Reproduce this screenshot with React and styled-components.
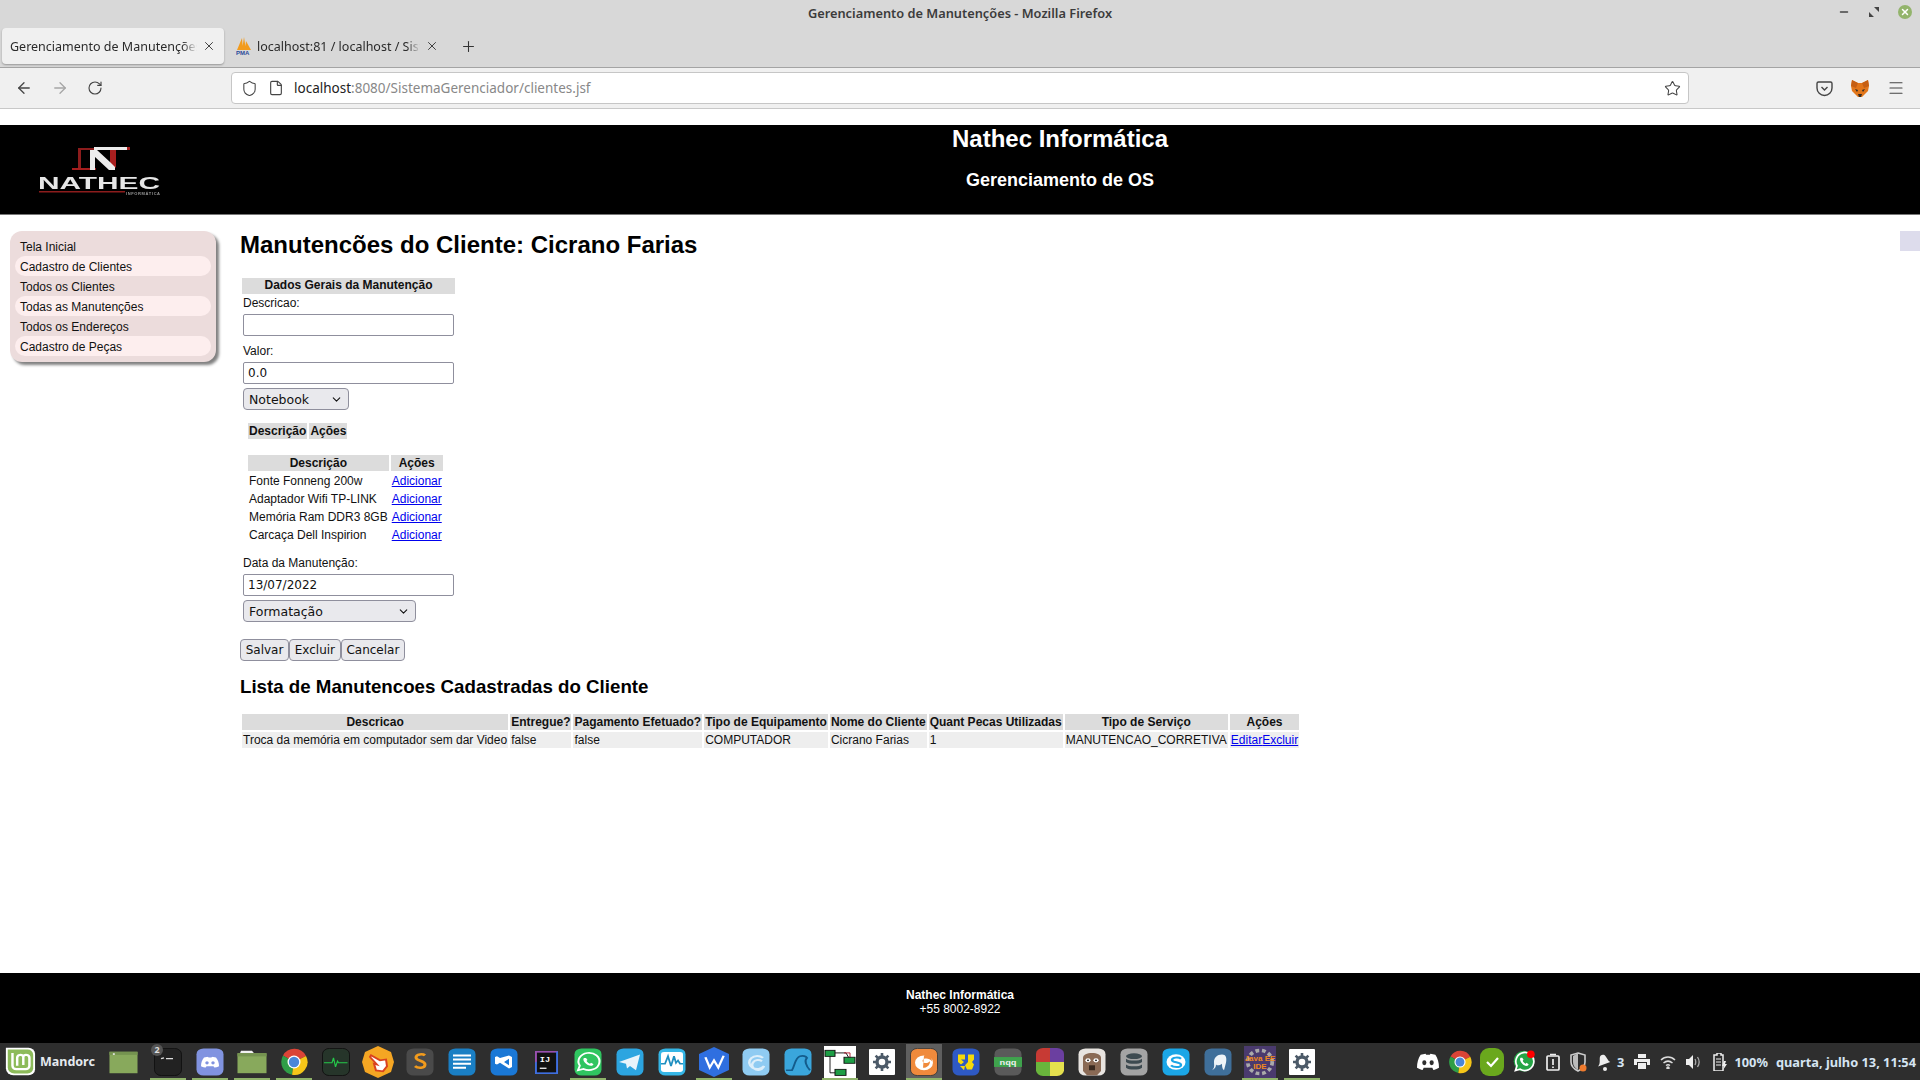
import React from 'react'
import styled, { createGlobalStyle } from 'styled-components'
import { ArrowLeft, ArrowRight, RotateCw, Shield, File, Star, Menu, X, Plus, ChevronDown, Minus } from 'lucide-react'

const Global = createGlobalStyle`
  html, body { margin: 0; padding: 0; background: #fff; }
  body { font-family: "Liberation Sans", Arial, sans-serif; font-size: 12px; color: #111; overflow: hidden; }
`

const uiFont = `"Noto Sans", "Open Sans", sans-serif`

const Screen = styled.div`
  width: 1920px;
  height: 1080px;
  display: flex;
  flex-direction: column;
`

const TitleBar = styled.div`
  height: 28px;
  flex: none;
  background: #d8d8d8;
  display: flex;
  align-items: flex-start;
  justify-content: center;
  position: relative;
  padding-top: 4px;
  box-sizing: border-box;
  font-family: ${uiFont};
  font-size: 12.8px;
  font-weight: 600;
  color: #3c3c3c;
`

const WinControls = styled.div`
  position: absolute;
  right: 8px;
  top: 5px;
  display: flex;
  align-items: center;
  gap: 18px;
  height: 14px;
`

const CloseDot = styled.div`
  width: 14px;
  height: 14px;
  border-radius: 50%;
  background: #93b46c;
  display: flex;
  align-items: center;
  justify-content: center;
  color: #fff;
`

const TabStrip = styled.div`
  height: 40px;
  flex: none;
  background: #d8d8d8;
  border-bottom: 1px solid #a4a4a4;
  box-sizing: border-box;
  display: flex;
  align-items: flex-start;
  padding-left: 2px;
`

const Tab = styled.div`
  width: ${(p) => p.$width}px;
  height: 36px;
  box-sizing: border-box;
  display: flex;
  align-items: center;
  padding: 0 8px;
  gap: 5px;
  font-family: ${uiFont};
  font-size: 12.5px;
  color: #2a2a2a;
  background: ${(p) => (p.$active ? '#f0f0f0' : 'transparent')};
  border-radius: 4px;
  box-shadow: ${(p) => (p.$active ? '0 1px 2px rgba(0,0,0,.3)' : 'none')};
  margin-right: ${(p) => p.$gap || 0}px;
`

const TabLabel = styled.span`
  flex: 1;
  overflow: hidden;
  white-space: nowrap;
  -webkit-mask-image: linear-gradient(to right, #000 92%, transparent);
  mask-image: linear-gradient(to right, #000 92%, transparent);
`

const NewTab = styled.div`
  height: 36px;
  display: flex;
  align-items: center;
  color: #333;
`

const ToolBar = styled.div`
  height: 41px;
  flex: none;
  background: #f0f0f0;
  border-bottom: 1px solid #c8c8c8;
  box-sizing: border-box;
  display: flex;
  align-items: center;
  padding-left: 15px;
`

const NavBtn = styled.div`
  width: 36px;
  display: flex;
  color: ${(p) => (p.$off ? '#a5a5a5' : '#444')};
`

const UrlBar = styled.div`
  margin-left: 108px;
  width: 1458px;
  height: 32px;
  background: #fff;
  border: 1px solid #c6c6c6;
  border-radius: 4px;
  box-sizing: border-box;
  display: flex;
  align-items: center;
  padding: 0 7px 0 9px;
  font-family: ${uiFont};
  font-size: 13.5px;
  color: #888;
`

const UrlIcon = styled.div`
  display: flex;
  color: #444;
  margin-right: ${(p) => p.$gap}px;
`

const UrlHost = styled.span`
  color: #222;
`

const UrlText = styled.div`
  flex: 1;
`

const ToolRight = styled.div`
  margin-left: auto;
  display: flex;
  align-items: center;
  gap: 18px;
  padding-right: 15px;
  color: #444;
`

const Page = styled.div`
  flex: 1;
  display: flex;
  flex-direction: column;
  padding-top: 16px;
  background: #fff;
  min-height: 0;
  position: relative;
`

const Banner = styled.div`
  height: 90px;
  flex: none;
  box-sizing: border-box;
  background: #000;
  border-bottom: 1px solid #777;
  display: flex;
  color: #fff;
  font-weight: bold;
`

const LogoBox = styled.div`
  width: 200px;
  padding: 17px 0 0 36px;
  box-sizing: border-box;
`

const BannerTitles = styled.div`
  flex: 1;
  text-align: center;
`

const BannerTitle = styled.h1`
  margin: 0;
  font-size: 24px;
  line-height: 27px;
`

const BannerSub = styled.h2`
  margin: 18px 0 0;
  font-size: 18px;
  line-height: 21px;
`

const Body = styled.div`
  flex: 1;
  display: flex;
  min-height: 0;
  padding: 16px 0 0 10px;
`

const Side = styled.nav`
  width: 206px;
  height: 131px;
  flex: none;
  box-sizing: border-box;
  padding: 5px;
  background: #ecdcdc;
  border-radius: 12px;
  box-shadow: 3px 3px 3px #808080;
`

const SideItem = styled.div`
  height: 20px;
  line-height: 22px;
  padding-left: 5px;
  border-radius: 10px;
  background: ${(p) => (p.$alt ? '#fdeeee' : 'transparent')};
`

const Main = styled.main`
  margin-left: 24px;
  flex: 1;
`

const Heading = styled.h1`
  margin: 0 0 20px;
  font-size: 24px;
  line-height: 27px;
  color: #000;
`

const FormBox = styled.div`
  width: 220px;
  padding-left: 2px;
`

const FormHead = styled.div`
  width: 213px;
  height: 16px;
  line-height: 15px;
  background: #dcdcdc;
  font-weight: bold;
  text-align: center;
`

const FieldLabel = styled.div`
  margin: ${(p) => p.$top}px 0 0 1px;
  height: 14px;
  line-height: 14px;
`

const TextField = styled.input`
  display: block;
  width: 211px;
  height: 22px;
  box-sizing: border-box;
  margin: 4px 0 0 1px;
  padding: 0 4px;
  border: 1px solid #8f8f9d;
  border-radius: 2px;
  background: #fff;
  font-family: "DejaVu Sans", sans-serif;
  font-size: 12px;
  color: #111;
`

const SelectBox = styled.div`
  width: ${(p) => p.$width}px;
  height: 22px;
  box-sizing: border-box;
  margin: 4px 0 0 1px;
  padding: 0 5px;
  border: 1px solid #8f8f9d;
  border-radius: 4px;
  background: #e9e9ed;
  display: flex;
  align-items: center;
  justify-content: space-between;
  font-family: "DejaVu Sans", sans-serif;
  font-size: 12.5px;
  color: #111;
`

const GridTable = styled.table`
  border-spacing: 2px;
  border-collapse: separate;
  font-size: 12px;
  margin: ${(p) => p.$margin || '0'};
  color: #111;
`

const Th = styled.th`
  background: #dcdcdc;
  padding: 1px;
  height: 14px;
  line-height: 14px;
  white-space: nowrap;
`

const Td = styled.td`
  background: ${(p) => (p.$shade ? '#eeeeee' : 'transparent')};
  padding: 1px;
  height: 14px;
  line-height: 14px;
  white-space: nowrap;
`

const Anchor = styled.a`
  color: #0000ee;
  text-decoration: underline;
`

const ButtonRow = styled.div`
  display: flex;
  margin-top: 17px;
`

const Action = styled.button`
  height: 22px;
  box-sizing: border-box;
  padding: 0 4.7px;
  border: 1px solid #8f8f9d;
  border-radius: 4px;
  background: #e9e9ed;
  font-family: "DejaVu Sans", sans-serif;
  font-size: 12px;
  color: #111;
`

const ListTitle = styled.h2`
  margin: 15px 0 14px;
  font-size: 18.72px;
  line-height: 22px;
  color: #000;
`

const SideMark = styled.div`
  position: absolute;
  right: 0;
  top: 122px;
  width: 20px;
  height: 20px;
  background: #dddcec;
`

const Footer = styled.footer`
  height: 70px;
  flex: none;
  background: #000;
  color: #fff;
  text-align: center;
  padding-top: 15px;
  box-sizing: border-box;
  line-height: 14px;
`

const FooterName = styled.div`
  font-weight: bold;
`

const TaskBar = styled.div`
  height: 37px;
  flex: none;
  background: #2e2e2e;
  display: flex;
  align-items: center;
  font-family: ${uiFont};
  color: #d5e4f2;
  font-weight: 700;
  font-size: 12.8px;
`

const Start = styled.div`
  width: 102px;
  flex: none;
  display: flex;
  align-items: center;
  gap: 4px;
  padding-left: 4px;
  box-sizing: border-box;
  color: #e4e9ee;
  font-size: 12.5px;
`

const Launcher = styled.div`
  display: flex;
`

const Slot = styled.div`
  width: 42px;
  height: 37px;
  flex: none;
  padding: 1px 3px 0;
  margin-right: ${(p) => p.$after || 0}px;
  box-sizing: border-box;
  display: flex;
  align-items: center;
  justify-content: center;
  position: relative;
  background: ${(p) => (p.$focus ? '#5f5f5f' : 'transparent')};
  background-clip: content-box;

  &::after {
    content: '';
    display: ${(p) => (p.$on ? 'block' : 'none')};
    position: absolute;
    left: 3px;
    right: 3px;
    bottom: 0;
    height: 2px;
    background: #8fb36a;
  }
`

const Tray = styled.div`
  margin-left: auto;
  display: flex;
  align-items: center;
  padding-right: 4px;
`

const TrayIcon = styled.div`
  display: flex;
  align-items: center;
  justify-content: center;
  width: ${(p) => p.$w || 26}px;
  position: relative;
`

const TrayText = styled.span`
  margin-left: ${(p) => p.$left || 0}px;
  margin-right: ${(p) => p.$right || 0}px;
  white-space: nowrap;
`

const Badge = styled.span`
  position: absolute;
  left: 4px;
  top: 1px;
  width: 12px;
  height: 12px;
  border-radius: 50%;
  background: #555;
  color: #ddd;
  font-size: 9px;
  line-height: 12px;
  text-align: center;
`

/* ---- drawings ---- */

const Pma = () => (
  <svg width="16" height="18" viewBox="0 0 16 18">
    <path d="M1 13 6 1l1 12zM6 13 8 0l2 13zM9 13 10 4l5 9z" fill="#f29b1d" />
    <text x="0" y="17.5" fontSize="6" fontWeight="bold" fill="#2a4a9a" fontFamily="Liberation Sans">PMA</text>
  </svg>
)

const Pocket = () => (
  <svg width="17" height="17" viewBox="0 0 17 17" fill="none" stroke="#444" strokeWidth="1.4">
    <path d="M2.5 2h12a1.5 1.5 0 0 1 1.500 1.500v4.500a7.500 7.500 0 0 1-15 0V3.500A1.500 1.500 0 0 1 2.500 2z" />
    <path d="M5.500 7 8.500 10l3-3" />
  </svg>
)

const Fox = () => (
  <svg width="18" height="17" viewBox="0 0 18 17">
    <path d="M1 0 7 3h4l6-3 1 6-1 5-4 4-2 2H7l-2-2-4-4-1-5z" fill="#e2761b" />
    <path d="M1 0 7 3 5 8 0 6zM17 0l-6 3 2 5 5-2z" fill="#c65f14" />
    <path d="M7 14h4l-1 3H8z" fill="#3b2a1f" />
    <path d="M4 9l3 1-1 2zM14 9l-3 1 1 2z" fill="#2a2a2a" />
  </svg>
)

const Logo = () => (
  <svg width="130" height="58" viewBox="0 0 130 58" style={{ filter: 'blur(.7px)' }}>
    <path d="M42 6h16v2H45v18h-3z" fill="#8c1c1c" />
    <path d="M36 26h24v2H36z" fill="#a61e1e" />
    <path d="M54 8h7l13 12V8h5v20h-6L59 15v13h-5z" fill="#ececec" />
    <path d="M58 5h34v3H58z" fill="#ececec" />
    <path d="M74 8h6v18l-6-6z" fill="#a81f1f" />
    <rect x="91" y="5" width="3" height="3" fill="#a81f1f" />
    <text x="2" y="47" fontFamily="Liberation Sans" fontWeight="bold" fontSize="16" textLength="122" lengthAdjust="spacingAndGlyphs" fill="#e6e6e6">NATHEC</text>
    <path d="M3 49h86v1.500H3z" fill="#8c1c1c" />
    <text x="90" y="53" fontFamily="Liberation Sans" fontSize="4" textLength="34" fill="#999">INFORMÁTICA</text>
  </svg>
)

const Mint = () => (
  <svg width="32" height="29" viewBox="0 0 34 34" preserveAspectRatio="none">
    <path d="M2 1h24a7 7 0 0 1 7 7v18a7 7 0 0 1-7 7H10a8 8 0 0 1-8-8z" fill="#fff" />
    <path d="M4 3h21a6 6 0 0 1 6 6v16a6 6 0 0 1-6 6H11a7 7 0 0 1-7-7z" fill="#8dbb5a" />
    <path d="M9 7v15a4 4 0 0 0 4 4h10a4 4 0 0 0 4-4V13a3.500 3.500 0 0 0-6.500-2A3.500 3.500 0 0 0 14 13v9M20.500 11v10" fill="none" stroke="#fff" strokeWidth="2.600" />
  </svg>
)

const Rounded = ({ bg, children, border }) => (
  <svg width="28" height="28" viewBox="0 0 28 34" preserveAspectRatio="none">
    <rect x="0.500" y="0.500" width="27" height="33" rx="7" fill={bg} stroke={border || 'none'} />
    {children}
  </svg>
)

const ChromeIcon = ({ size = 28 }) => (
  <svg width={size} height={size} viewBox="0 0 28 28">
    <path d="M14 14 3 7.500A13 13 0 0 1 26 8z" fill="#db4437" />
    <path d="M14 14 3 7.500a13 13 0 0 0 9 19.300z" fill="#2f9e47" />
    <path d="M14 14 26 8a13 13 0 0 1-14 18.800z" fill="#f5c518" />
    <circle cx="14" cy="14" r="6.500" fill="#fff" />
    <circle cx="14" cy="14" r="5.200" fill="#4a86d8" />
  </svg>
)

const Gear = ({ color = '#4c5a68' }) => (
  <svg width="18" height="18" viewBox="0 0 18 18">
    <circle cx="9" cy="9" r="5" fill="none" stroke={color} strokeWidth="3.400" />
    <path d="M9 0v4M9 14v4M0 9h4M14 9h4M2.600 2.600l2.800 2.800M12.600 12.600l2.800 2.800M2.600 15.400l2.800-2.800M12.600 5.400l2.800-2.800" stroke={color} strokeWidth="2.600" />
  </svg>
)

const WhatsApp = ({ size = 28 }) => (
  <svg width={size} height={size} viewBox="0 0 28 28">
    <path d="M4 24l1.800-5.500A10.500 10.500 0 1 1 9.600 22.400z" fill="none" stroke="#fff" strokeWidth="2" />
    <path d="M10 9c-1 1-1 3 1 6s5 4 7 3.500c1-.3 1.500-1.500 1.300-2L17 15l-1 1c-1.500-.5-3-2-3.500-3.500l1-1L12 9z" fill="#fff" />
  </svg>
)

const DiscordFace = ({ w = 18, color = '#fff', eye = '#8193e0' }) => (
  <svg width={w} height={w * 0.78} viewBox="0 0 18 14">
    <path d="M3 1.500 7 .5l.5 1h3l.5-1 4 1c2 3 3 6.500 3 10.500-1.500 1-3 1.500-4.500 2L12.500 12h-7L4.500 14C3 13.500 1.500 13 0 12 0 8 1 4.500 3 1.500z" fill={color} />
    <ellipse cx="6" cy="8" rx="1.700" ry="2" fill={eye} />
    <ellipse cx="12" cy="8" rx="1.700" ry="2" fill={eye} />
  </svg>
)

const FolderIcon = ({ tab }) => (
  <svg width={tab ? 30 : 29} height={tab ? 24 : 23} viewBox="0 0 30 30" preserveAspectRatio="none">
    {tab && <path d="M4 1h11l2 3H3z" fill="#f2f2f2" />}
    <rect x="0.500" y={tab ? 4 : 1} width="29" height={tab ? 25 : 28} fill="#88a95c" />
    <rect x="0.500" y={tab ? 4 : 1} width="29" height="4" fill="#759350" />
    {!tab && <rect x="4" y="3" width="2" height="2" fill="#eee" />}
  </svg>
)

const launcher = [
  { id: 'files', after: 3, icon: <FolderIcon /> },
  {
    id: 'term', on: true, badge: '2',
    icon: (
      <Rounded bg="#222" border="#111">
        <path d="M7 13l3-1M12 13h7" stroke="#ddd" strokeWidth="1.500" />
      </Rounded>
    ),
  },
  { id: 'discord', on: true, icon: <Rounded bg="#8193e0"><foreignObject x="5" y="10" width="18" height="15"><DiscordFace /></foreignObject></Rounded> },
  { id: 'nemo', on: true, icon: <FolderIcon tab /> },
  { id: 'chrome', on: true, icon: <ChromeIcon /> },
  {
    id: 'sysmon',
    icon: (
      <Rounded bg="#26352a" border="#111">
        <path d="M2 18h8l1.500-6 2 11 2-7 1 2h9" fill="none" stroke="#25c94a" strokeWidth="1.200" />
      </Rounded>
    ),
  },
  {
    id: 'hand',
    icon: (
      <svg width="32" height="32" viewBox="0 0 32 38" preserveAspectRatio="none">
        <path d="M16 0l13 7 3 12-3 12-13 7-13-7-3-12 3-12z" fill="#f5a623" />
        <path d="M9 11l9 6 6-1 1 8-4 6-7-1-2-8 3 1-7-9z" fill="#fff" stroke="#d9421f" strokeWidth="2" />
      </svg>
    ),
  },
  {
    id: 'sublime',
    icon: (
      <Rounded bg="#4a4a4a">
        <path d="M19 9c-2-2-9-2-9 2.500S19 15 19 20s-7 5-10 2" fill="none" stroke="#f29b1d" strokeWidth="3" />
      </Rounded>
    ),
  },
  {
    id: 'docs',
    icon: (
      <Rounded bg="#1a7fc4">
        <path d="M5 9h18M5 14h18M5 19h18M5 24h13" stroke="#fff" strokeWidth="2.400" />
      </Rounded>
    ),
  },
  {
    id: 'vscode',
    icon: (
      <Rounded bg="#1a78d6">
        <path d="M19 9l3 2v12l-3 2-9-7-3 2-2-1v-8l2-1 3 2zM19 13l-5 4 5 4z" fill="#fff" fillRule="evenodd" />
      </Rounded>
    ),
  },
  {
    id: 'idea',
    icon: (
      <svg width="23" height="23" viewBox="0 0 24 28" preserveAspectRatio="none">
        <rect x="0" y="0" width="24" height="28" fill="#3f6fe0" />
        <path d="M0 14V0h24z" fill="#d63c8e" opacity=".6" />
        <rect x="2" y="2" width="20" height="24" fill="#111" />
        <text x="5" y="13" fontFamily="Liberation Mono" fontWeight="bold" fontSize="9" fill="#fff">IJ</text>
        <path d="M5 21h7" stroke="#fff" strokeWidth="1.500" />
      </svg>
    ),
  },
  { id: 'whats', on: true, icon: <Rounded bg="#2fc560"><foreignObject x="0" y="3" width="28" height="28"><WhatsApp /></foreignObject></Rounded> },
  {
    id: 'telegram',
    icon: (
      <Rounded bg="#2ca5e0">
        <path d="M3 17 24 8l-4 19-6-5-3 3-1-6z" fill="#e8f4fb" />
      </Rounded>
    ),
  },
  {
    id: 'wave',
    icon: (
      <Rounded bg="#35b6e6">
        <rect x="3" y="5" width="22" height="24" rx="3" fill="#fff" />
        <path d="M3 19h4l3-9 3 12 3-12 2 8 2-3 2 4h3" fill="none" stroke="#1f8fc0" strokeWidth="1.800" />
      </Rounded>
    ),
  },
  {
    id: 'wps', on: true,
    icon: (
      <svg width="30" height="30" viewBox="0 0 28 38" preserveAspectRatio="none">
        <path d="M14 0l14 9v20l-14 9-14-9V9z" fill="#2f6fe0" />
        <path d="M6 13l4 13 4-9 4 9 5-15" fill="none" stroke="#fff" strokeWidth="2.200" />
      </svg>
    ),
  },
  {
    id: 'bird',
    icon: (
      <Rounded bg="#8fcbf2">
        <path d="M21 12a8 8 0 1 0 1 10 6 6 0 1 1-2-6" fill="none" stroke="#dceefa" strokeWidth="2.500" />
      </Rounded>
    ),
  },
  {
    id: 'shark',
    icon: (
      <Rounded bg="#3aa6dc">
        <path d="M2 27h6c3-6 3-15 8-17 3-1 6 0 7 2-3 3-1 10 3 15" fill="none" stroke="#145c8c" strokeWidth="2" />
      </Rounded>
    ),
  },
  {
    id: 'net', on: true,
    icon: (
      <svg width="32" height="32" viewBox="0 0 32 37" preserveAspectRatio="none">
        <rect width="32" height="37" fill="#fff" />
        <path d="M6 9v22h12M8 8h14l4 8" fill="none" stroke="#111" />
        <path d="M20 8h6v8" fill="none" stroke="#b0152a" />
        <rect x="1" y="5" width="10" height="7" fill="#1d9e45" stroke="#111" />
        <rect x="20" y="13" width="11" height="7" fill="#1d9e45" stroke="#111" />
        <rect x="11" y="27" width="11" height="7" fill="#1d9e45" stroke="#111" />
      </svg>
    ),
  },
  {
    id: 'gear',
    icon: (
      <svg width="26" height="26" viewBox="0 0 26 26">
        <rect width="26" height="26" rx="1" fill="#fff" />
        <foreignObject x="4" y="4" width="18" height="18"><Gear /></foreignObject>
      </svg>
    ),
  },
  {
    id: 'firefox', on: true, focus: true,
    icon: (
      <Rounded bg="#f08a3c" border="#3a3a3a">
        <circle cx="14" cy="18" r="9" fill="#fff" />
        <path d="M14 9c5-2 8 2 8 7-2-3-5-4-8-3-2 1-2 4 0 5 3 1 5-1 6-2 0 5-3 8-7 8" fill="#f08a3c" />
      </Rounded>
    ),
  },
  {
    id: 'vbox',
    icon: (
      <Rounded bg="#2e59c4">
        <path d="M6 8h7v6H9l3 3-3 3-3-3v-3zM16 8h6v6l-2 3 2 3-2 6h-5l-2-5 3-4zM8 22h5l-1 5z" fill="#f5d90a" />
      </Rounded>
    ),
  },
  {
    id: 'nqq',
    icon: (
      <Rounded bg="#5a5a5a">
        <rect x="0" y="11" width="28" height="12" fill="#3fa34d" />
        <text x="14" y="20.500" textAnchor="middle" fontFamily="Liberation Mono" fontWeight="bold" fontSize="9.500" fill="#eee">nqq</text>
      </Rounded>
    ),
  },
  {
    id: 'colors',
    icon: (
      <svg width="28" height="28" viewBox="0 0 28 34" preserveAspectRatio="none">
        <path d="M7 0h7v17H0V7a7 7 0 0 1 7-7z" fill="#c73a34" />
        <path d="M14 0h7a7 7 0 0 1 7 7v10H14z" fill="#6b3fa0" />
        <path d="M0 17h14v17H7a7 7 0 0 1-7-7z" fill="#69b53c" />
        <path d="M14 17h14v10a7 7 0 0 1-7 7h-7z" fill="#e5e04e" />
      </svg>
    ),
  },
  {
    id: 'dbeaver',
    icon: (
      <Rounded bg="#e8e4e0">
        <path d="M5 12c0-4 4-6 9-6s9 2 9 6v16l-4 5H9l-4-5z" fill="#8a6a55" />
        <circle cx="10" cy="15" r="2.600" fill="#fff" />
        <circle cx="18" cy="15" r="2.600" fill="#fff" />
        <circle cx="10" cy="15" r="1" fill="#111" />
        <circle cx="18" cy="15" r="1" fill="#111" />
        <rect x="11" y="21" width="6" height="6" fill="#3a2a20" />
      </Rounded>
    ),
  },
  {
    id: 'db',
    icon: (
      <Rounded bg="#a4a4a4">
        <ellipse cx="14" cy="10" rx="8" ry="3.500" fill="#3d4a50" />
        <path d="M6 13c2 3 14 3 16 0v4c-2 3-14 3-16 0zM6 20c2 3 14 3 16 0v4c-2 3-14 3-16 0z" fill="#3d4a50" />
      </Rounded>
    ),
  },
  {
    id: 'skype',
    icon: (
      <Rounded bg="#1ba6e6">
        <circle cx="14" cy="17" r="9.500" fill="#fff" />
        <path d="M19 13c-2-2-9-2-9 1.500s9 2 9 6-8 3-10 .5" fill="none" stroke="#1ba6e6" strokeWidth="2.400" />
      </Rounded>
    ),
  },
  {
    id: 'pg',
    icon: (
      <Rounded bg="#3f6f9a">
        <path d="M8 27c3-3 2-6 2-10 0-5 3-9 8-9 4 0 5 4 4 10l-2 9c-2-2-2-5-2-8-2 2-5 3-6 1 0 3-1 5-4 7z" fill="#eef4f8" />
      </Rounded>
    ),
  },
  {
    id: 'java', on: true,
    icon: (
      <svg width="32" height="32" viewBox="0 0 34 36" preserveAspectRatio="none">
        <rect width="34" height="36" fill="#4a3a6e" />
        <circle cx="17" cy="18" r="13" fill="none" stroke="#aaa" strokeWidth="4" strokeDasharray="4 3" />
        <text x="17" y="17" textAnchor="middle" fontFamily="Liberation Sans" fontSize="8.500" fill="#f08a1d">Java EE</text>
        <text x="17" y="26" textAnchor="middle" fontFamily="Liberation Sans" fontSize="8.500" fill="#f08a1d">IDE</text>
      </svg>
    ),
  },
  {
    id: 'settings', on: true,
    icon: (
      <svg width="26" height="26" viewBox="0 0 26 26">
        <rect width="26" height="26" rx="1" fill="#fff" />
        <foreignObject x="4" y="4" width="18" height="18"><Gear /></foreignObject>
      </svg>
    ),
  },
]

const parts = ['Fonte Fonneng 200w', 'Adaptador Wifi TP-LINK', 'Memória Ram DDR3 8GB', 'Carcaça Dell Inspirion']
const menu = ['Tela Inicial', 'Cadastro de Clientes', 'Todos os Clientes', 'Todas as Manutenções', 'Todos os Endereços', 'Cadastro de Peças']
const columns = ['Descricao', 'Entregue?', 'Pagamento Efetuado?', 'Tipo de Equipamento', 'Nome do Cliente', 'Quant Pecas Utilizadas', 'Tipo de Serviço', 'Ações']
const row = ['Troca da memória em computador sem dar Video', 'false', 'false', 'COMPUTADOR', 'Cicrano Farias', '1', 'MANUTENCAO_CORRETIVA']

export default function App() {
  return (
    <Screen>
      <Global />
      <TitleBar>
        Gerenciamento de Manutenções - Mozilla Firefox
        <WinControls>
          <Minus size={12} strokeWidth={3} color="#444" />
          <svg width="12" height="12" viewBox="0 0 12 12"><path d="M6 1h5v5zM1 6l5 5H1z" fill="#444" /></svg>
          <CloseDot><X size={10} strokeWidth={3.500} /></CloseDot>
        </WinControls>
      </TitleBar>
      <TabStrip>
        <Tab $active $width={222} $gap={4}>
          <TabLabel>Gerenciamento de Manutenções</TabLabel>
          <X size={14} strokeWidth={1.500} />
        </Tab>
        <Tab $width={219} $gap={13}>
          <Pma />
          <TabLabel>localhost:81 / localhost / Sistema</TabLabel>
          <X size={14} strokeWidth={1.500} />
        </Tab>
        <NewTab><Plus size={17} strokeWidth={1.500} /></NewTab>
      </TabStrip>
      <ToolBar>
        <NavBtn><ArrowLeft size={18} strokeWidth={1.700} /></NavBtn>
        <NavBtn $off><ArrowRight size={18} strokeWidth={1.700} /></NavBtn>
        <NavBtn><RotateCw size={16} strokeWidth={1.700} /></NavBtn>
        <UrlBar>
          <UrlIcon $gap={10}><Shield size={17} strokeWidth={1.500} /></UrlIcon>
          <UrlIcon $gap={10}><File size={16} strokeWidth={1.700} /></UrlIcon>
          <UrlText><UrlHost>localhost</UrlHost>:8080/SistemaGerenciador/clientes.jsf</UrlText>
          <UrlIcon $gap={0}><Star size={17} strokeWidth={1.500} /></UrlIcon>
        </UrlBar>
        <ToolRight>
          <Pocket />
          <Fox />
          <Menu size={18} strokeWidth={1.500} />
        </ToolRight>
      </ToolBar>
      <Page>
        <Banner>
          <LogoBox><Logo /></LogoBox>
          <BannerTitles>
            <BannerTitle>Nathec Informática</BannerTitle>
            <BannerSub>Gerenciamento de OS</BannerSub>
          </BannerTitles>
        </Banner>
        <Body>
          <Side>
            {menu.map((m, i) => (
              <SideItem key={m} $alt={i % 2 === 1}>{m}</SideItem>
            ))}
          </Side>
          <Main>
            <Heading>Manutencões do Cliente: Cicrano Farias</Heading>
            <FormBox>
              <FormHead>Dados Gerais da Manutenção</FormHead>
              <FieldLabel $top={2}>Descricao:</FieldLabel>
              <TextField readOnly value="" />
              <FieldLabel $top={8}>Valor:</FieldLabel>
              <TextField readOnly value="0.0" />
              <SelectBox $width={106}>Notebook <ChevronDown size={13} strokeWidth={2} /></SelectBox>
              <GridTable $margin="11px 0 0 4px">
                <thead><tr><Th>Descrição</Th><Th>Ações</Th></tr></thead>
              </GridTable>
              <GridTable $margin="12px 0 0 4px">
                <thead><tr><Th>Descrição</Th><Th>Ações</Th></tr></thead>
                <tbody>
                  {parts.map((p) => (
                    <tr key={p}><Td>{p}</Td><Td><Anchor href="#">Adicionar</Anchor></Td></tr>
                  ))}
                </tbody>
              </GridTable>
              <FieldLabel $top={11}>Data da Manutenção:</FieldLabel>
              <TextField readOnly value="13/07/2022" />
              <SelectBox $width={173}>Formatação <ChevronDown size={13} strokeWidth={2} /></SelectBox>
            </FormBox>
            <ButtonRow>
              <Action>Salvar</Action>
              <Action>Excluir</Action>
              <Action>Cancelar</Action>
            </ButtonRow>
            <ListTitle>Lista de Manutencoes Cadastradas do Cliente</ListTitle>
            <GridTable $margin="0">
              <thead><tr>{columns.map((c) => <Th key={c}>{c}</Th>)}</tr></thead>
              <tbody>
                <tr>
                  {row.map((c, i) => <Td $shade key={i}>{c}</Td>)}
                  <Td $shade><Anchor href="#">Editar</Anchor><Anchor href="#">Excluir</Anchor></Td>
                </tr>
              </tbody>
            </GridTable>
          </Main>
        </Body>
        <SideMark />
        <Footer>
          <FooterName>Nathec Informática</FooterName>
          <div>+55 8002-8922</div>
        </Footer>
      </Page>
      <TaskBar>
        <Start><Mint /> Mandorc</Start>
        <Launcher>
          {launcher.map((a) => (
            <Slot key={a.id} $on={a.on} $focus={a.focus} $after={a.after}>
              {a.icon}
              {a.badge && <Badge>{a.badge}</Badge>}
            </Slot>
          ))}
        </Launcher>
        <Tray>
          <TrayIcon $w={32}><DiscordFace w={22} eye="#2e2e2e" /></TrayIcon>
          <TrayIcon $w={32}><ChromeIcon size={24} /></TrayIcon>
          <TrayIcon $w={32}>
            <svg width="24" height="28" viewBox="0 0 24 28"><rect width="24" height="28" rx="9" fill="#6aa81d" /><path d="M7 14l4 4 7-8" fill="none" stroke="#fff" strokeWidth="2.200" /></svg>
          </TrayIcon>
          <TrayIcon $w={32}>
            <svg width="24" height="26" viewBox="0 0 28 28"><circle cx="14" cy="13" r="12" fill="#25a546" /><foreignObject width="28" height="28"><WhatsApp /></foreignObject><circle cx="22" cy="5" r="4.500" fill="#f00" /></svg>
          </TrayIcon>
          <TrayIcon $w={26}>
            <svg width="14" height="18" viewBox="0 0 14 18" fill="none" stroke="#eee" strokeWidth="1.700"><rect x="1" y="3" width="12" height="14" rx="1" /><path d="M4 1.500h6M7 6v6M7 13.500v1.500" /></svg>
          </TrayIcon>
          <TrayIcon $w={24}>
            <svg width="18" height="20" viewBox="0 0 18 20"><path d="M9 1l7 2v7c0 4-3 7-7 9-4-2-7-5-7-9V3z" fill="none" stroke="#ccc" strokeWidth="1.600" /><path d="M9 1v17c-3-2-5-4-5-8V4z" fill="#bbb" /><circle cx="14" cy="16" r="3.500" fill="#ef7b2e" /></svg>
          </TrayIcon>
          <TrayIcon $w={26}>
            <svg width="16" height="18" viewBox="0 0 16 18"><path d="M2 12c3-2 3-5 4-8 1-3 5-3 6 0 1 2 1 5 3 7z" fill="#eee" transform="rotate(-15 8 9)" /><circle cx="10" cy="16" r="2" fill="#eee" /></svg>
          </TrayIcon>
          <TrayText $left={1} $right={4}>3</TrayText>
          <TrayIcon $w={28}>
            <svg width="16" height="15" viewBox="0 0 16 15"><path d="M4 0h8v4H4zM0 5h16v6h-3V8H3v3H0zM4 9h8v6H4z" fill="#eee" /></svg>
          </TrayIcon>
          <TrayIcon $w={24}>
            <svg width="16" height="14" viewBox="0 0 16 14" fill="none" stroke="#ddd" strokeWidth="1.500"><path d="M1 5c4-4 10-4 14 0M3.500 8c3-2.500 6-2.500 9 0M6 10.500c1.500-1 2.500-1 4 0" /><circle cx="8" cy="13" r="1" fill="#ddd" /></svg>
          </TrayIcon>
          <TrayIcon $w={26}>
            <svg width="16" height="16" viewBox="0 0 16 16"><path d="M1 5h3l4-4v14l-4-4H1z" fill="#eee" /><path d="M10 5c1 2 1 4 0 6M12.500 3c2 3 2 7 0 10" fill="none" stroke="#aaa" strokeWidth="1.300" /></svg>
          </TrayIcon>
          <TrayIcon $w={28}>
            <svg width="14" height="18" viewBox="0 0 14 18"><path d="M4 0h4v2h2v16H1V2h3z" fill="none" stroke="#eee" strokeWidth="1.500" /><path d="M3 6h5M3 9h5M3 12h5" stroke="#eee" strokeWidth="1.200" /><path d="M11 8l-2 5h2l-1 4 4-6h-2l1-3z" fill="#eee" /></svg>
          </TrayIcon>
          <TrayText>100%</TrayText>
          <TrayText $left={8}>quarta, julho 13, 11:54</TrayText>
        </Tray>
      </TaskBar>
    </Screen>
  )
}
